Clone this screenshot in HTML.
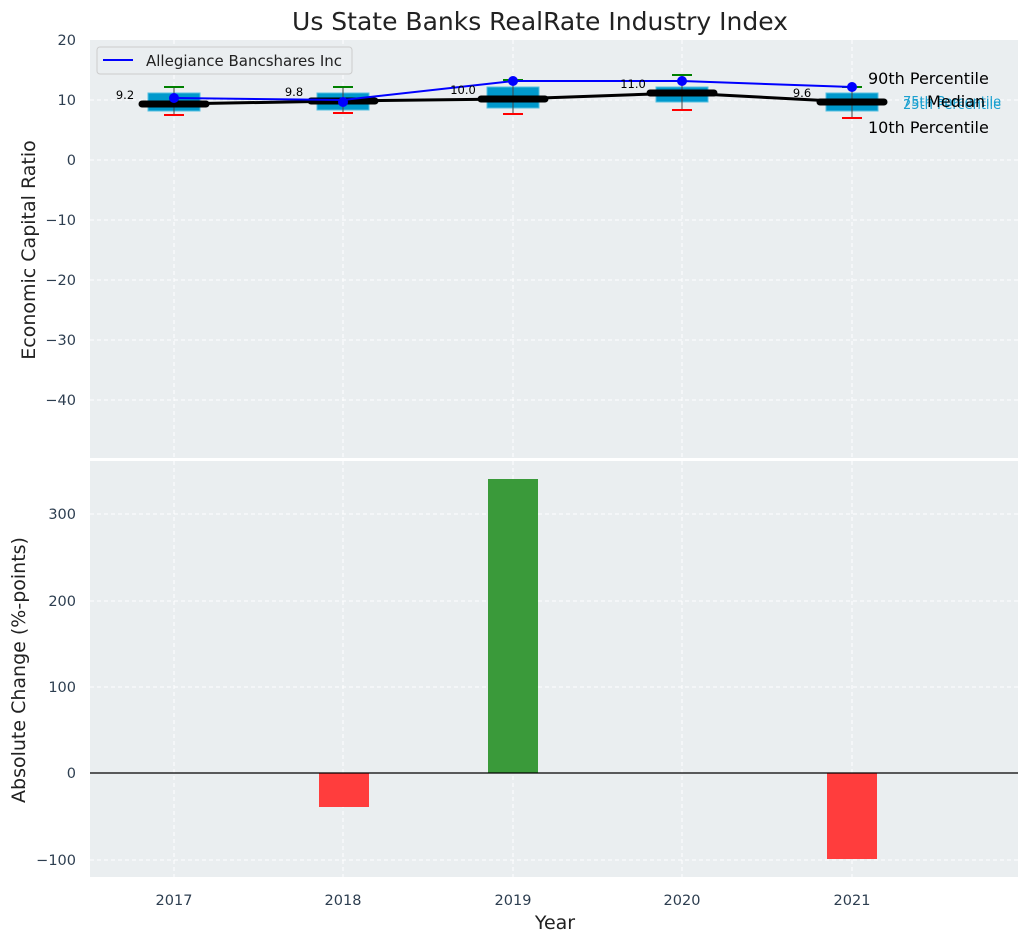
<!DOCTYPE html><html><head><style>body{margin:0;background:#fff}svg{display:block;font-family:"DejaVu Sans","Liberation Sans",sans-serif}</style></head><body>
<svg width="1029" height="942" viewBox="0 0 1029 942">
<rect x="90" y="40" width="928" height="418" fill="#eaeef0"/>
<rect x="90" y="461" width="928" height="416" fill="#eaeef0"/>
<g stroke="#fff" stroke-dasharray="4,3" stroke-width="1">
<line x1="90" x2="1018" y1="100" y2="100"/><line x1="90" x2="1018" y1="160" y2="160"/><line x1="90" x2="1018" y1="220" y2="220"/><line x1="90" x2="1018" y1="280" y2="280"/><line x1="90" x2="1018" y1="340" y2="340"/><line x1="90" x2="1018" y1="400" y2="400"/>
<line x1="90" x2="1018" y1="514" y2="514"/><line x1="90" x2="1018" y1="601" y2="601"/><line x1="90" x2="1018" y1="687" y2="687"/><line x1="90" x2="1018" y1="860" y2="860"/>
<line x1="174" x2="174" y1="40" y2="458"/><line x1="343" x2="343" y1="40" y2="458"/><line x1="513" x2="513" y1="40" y2="458"/><line x1="682" x2="682" y1="40" y2="458"/><line x1="852" x2="852" y1="40" y2="458"/>
<line x1="174" x2="174" y1="461" y2="877"/><line x1="343" x2="343" y1="461" y2="877"/><line x1="513" x2="513" y1="461" y2="877"/><line x1="682" x2="682" y1="461" y2="877"/><line x1="852" x2="852" y1="461" y2="877"/>
</g>
<text x="540" y="30" font-size="25" text-anchor="middle" fill="#222">Us State Banks RealRate Industry Index</text>
<g font-size="14.5" fill="#2d3e50" text-anchor="end">
<text x="76" y="45">20</text><text x="76" y="105">10</text><text x="76" y="165">0</text><text x="76" y="225">−10</text><text x="76" y="285">−20</text><text x="76" y="345">−30</text><text x="76" y="405">−40</text>
<text x="76" y="519">300</text><text x="76" y="606">200</text><text x="76" y="692">100</text><text x="76" y="778">0</text><text x="76" y="865">−100</text>
</g>
<g font-size="14.5" fill="#2d3e50" text-anchor="middle"><text x="174" y="905">2017</text><text x="343" y="905">2018</text><text x="513" y="905">2019</text><text x="682" y="905">2020</text><text x="852" y="905">2021</text></g>
<text x="555" y="929" font-size="19" text-anchor="middle" fill="#222">Year</text>
<text transform="translate(35,250) rotate(-90)" font-size="19" text-anchor="middle" fill="#222">Economic Capital Ratio</text>
<text transform="translate(25,670) rotate(-90)" font-size="19" text-anchor="middle" fill="#222">Absolute Change (%-points)</text>
<g fill="#0099cc" stroke="#55c0e0" stroke-width="1">
<rect x="148" y="93" width="52" height="18"/><rect x="317" y="93" width="52" height="17"/><rect x="487" y="87" width="52" height="21"/><rect x="656" y="87" width="52" height="15"/><rect x="826" y="93" width="52" height="18"/></g>
<g stroke="#444" stroke-width="1"><line x1="174" x2="174" y1="87" y2="115"/><line x1="343" x2="343" y1="87" y2="113"/><line x1="513" x2="513" y1="80" y2="114"/><line x1="682" x2="682" y1="75" y2="110"/><line x1="852" x2="852" y1="87" y2="118"/></g>
<g stroke="green" stroke-width="2"><line x1="164" x2="184" y1="87" y2="87"/><line x1="333" x2="353" y1="87" y2="87"/><line x1="503" x2="523" y1="80" y2="80"/><line x1="672" x2="692" y1="75" y2="75"/><line x1="842" x2="862" y1="87" y2="87"/></g>
<g stroke="red" stroke-width="2"><line x1="164" x2="184" y1="115" y2="115"/><line x1="333" x2="353" y1="113" y2="113"/><line x1="503" x2="523" y1="114" y2="114"/><line x1="672" x2="692" y1="110" y2="110"/><line x1="842" x2="862" y1="118" y2="118"/></g>
<polyline points="174,104 343,101 513,99 682,93 852,102" fill="none" stroke="#000" stroke-width="3"/>
<g stroke="#000" stroke-width="7" stroke-linecap="round"><line x1="142" x2="206" y1="104" y2="104"/><line x1="311" x2="375" y1="101" y2="101"/><line x1="481" x2="545" y1="99" y2="99"/><line x1="650" x2="714" y1="93" y2="93"/><line x1="820" x2="884" y1="102" y2="102"/></g>
<polyline points="174,98 343,100 513,81 682,81 852,87" fill="none" stroke="#0000ff" stroke-width="2"/>
<g fill="#0000ff"><circle cx="174" cy="98" r="5"/><circle cx="343" cy="102" r="5"/><circle cx="513" cy="81" r="5"/><circle cx="682" cy="81" r="5"/><circle cx="852" cy="87" r="5"/></g>
<g font-size="11.5" fill="#000" text-anchor="middle"><text x="125" y="99">9.2</text><text x="294" y="96">9.8</text><text x="463" y="94">10.0</text><text x="633" y="88">11.0</text><text x="802" y="97">9.6</text></g>
<text x="868" y="84" font-size="16">90th Percentile</text>
<text x="868" y="133" font-size="16">10th Percentile</text>
<text x="903" y="106" font-size="13" fill="#1aa0d0">75th Percentile</text>
<text x="903" y="109" font-size="13" fill="#1aa0d0">25th Percentile</text>
<text x="927" y="107" font-size="16">Median</text>
<rect x="97" y="47" width="255" height="27" rx="3" fill="#eaeef0" stroke="#ccc"/>
<line x1="103" x2="133" y1="60" y2="60" stroke="#0000ff" stroke-width="2"/>
<text x="146" y="66" font-size="15" fill="#222">Allegiance Bancshares Inc</text>
<rect x="319" y="773" width="50" height="34" fill="#ff3d3d"/>
<rect x="488" y="479" width="50" height="294" fill="#3a9a3a"/>
<rect x="827" y="773" width="50" height="86" fill="#ff3d3d"/>
<line x1="90" x2="1018" y1="773" y2="773" stroke="#000" stroke-width="1.2"/>
</svg></body></html>
